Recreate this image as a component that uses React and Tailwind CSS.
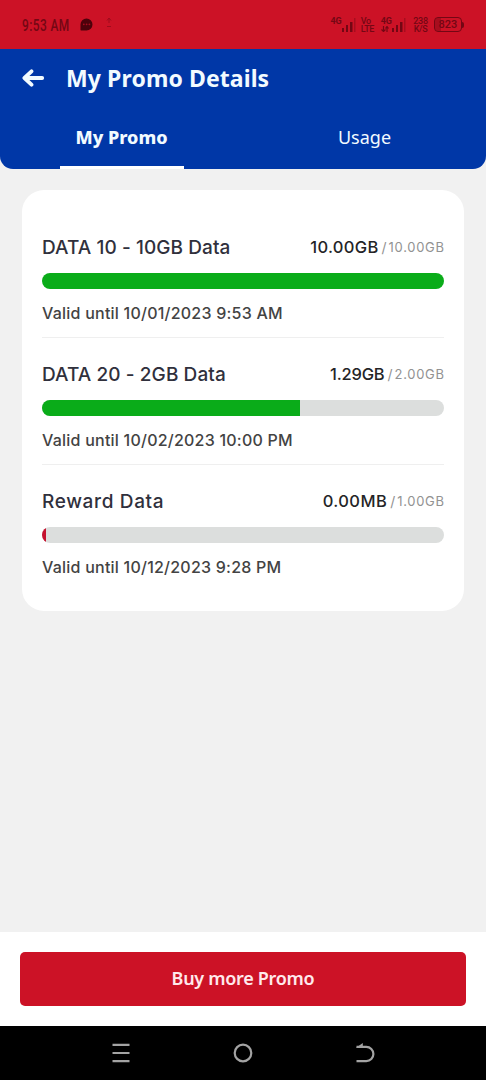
import React, { useState } from 'react';

const promos = [
  {
    name: 'DATA 10 - 10GB Data',
    nameClass: 'tracking-[0.08px]',
    left: '10.00GB',
    leftClass: 'tracking-[0.3px]',
    total: '10.00GB',
    until: '10/01/2023 9:53 AM',
    percent: 100,
    color: 'bg-[#0aac19]',
  },
  {
    name: 'DATA 20 - 2GB Data',
    nameClass: 'tracking-[0.08px]',
    left: '1.29GB',
    leftClass: 'tracking-[-0.2px]',
    total: '2.00GB',
    until: '10/02/2023 10:00 PM',
    percent: 64.2,
    color: 'bg-[#0aac19]',
  },
  {
    name: 'Reward Data',
    nameClass: 'tracking-[0.65px]',
    left: '0.00MB',
    leftClass: 'tracking-[0.4px]',
    total: '1.00GB',
    until: '10/12/2023 9:28 PM',
    percent: 1,
    color: 'bg-[#c5122f]',
  },
];

const Signal = () => (
  <svg width="14" height="14" viewBox="0 0 14 14" fill="currentColor">
    <rect x="0" y="10" width="2" height="4" />
    <rect x="4" y="7" width="2" height="7" />
    <rect x="8" y="4" width="2.5" height="10" />
    <rect x="12" y="0" width="1.5" height="14" opacity="0.4" />
  </svg>
);

const StatusBar = () => (
  <div className="h-[49px] shrink-0 bg-[#cc1226] text-[#740714] flex items-center justify-between pl-[22px] pr-[22px] font-['Roboto',sans-serif]">
    <div className="flex items-center">
      <span className="w-[47px] text-[17px] leading-4 font-medium tracking-[0.6px] whitespace-nowrap">
        <span className="inline-block origin-left scale-x-[0.7]">9:53 AM</span>
      </span>
      <svg className="ml-[11px]" width="13" height="13" viewBox="0 0 13 13">
        <path d="M6.5 0.5a6 6 0 1 1 0 12H1a.7.7 0 0 1-.5-.7V6.5a6 6 0 0 1 6-6z" fill="#4d020b" />
        <circle cx="3.8" cy="6.3" r="0.9" fill="#a80d1e" />
        <circle cx="6.6" cy="6.3" r="0.9" fill="#a80d1e" />
        <circle cx="9.4" cy="6.3" r="0.9" fill="#a80d1e" />
      </svg>
      <svg className="ml-[13px] mb-1" width="6" height="12" viewBox="0 0 6 12" fill="none" stroke="#9e0b1c" strokeWidth="1">
        <path d="M1 3.5L3 1l2 2.5M3 1v5M1 9.5h4" />
      </svg>
    </div>

    <div className="flex items-center h-4">
      <div className="flex items-end h-[15px]">
        <span className="text-[9px] leading-[9px] font-bold self-start">4G</span>
        <Signal />
      </div>
      <div className="ml-[5px] w-[15px] text-[9px] leading-[8px] font-medium tracking-[-0.3px] flex flex-col">
        <span>Vo</span>
        <span>LTE</span>
      </div>
      <div className="ml-[5px] flex items-end h-[15px]">
        <div className="self-start flex flex-col">
          <span className="text-[9px] leading-[9px] font-bold">4G</span>
          <svg width="8" height="6" viewBox="0 0 8 6" fill="none" stroke="currentColor" strokeWidth="1.2">
            <path d="M2.5 0v5.5M.5 3.5l2 2 2-2M6 6V.5M4.5 2.5l1.5-2 1.5 2" />
          </svg>
        </div>
        <Signal />
      </div>
      <div className="ml-[7px] w-[15px] text-[9px] leading-[8px] font-medium tracking-[-0.3px] flex flex-col items-center">
        <span>238</span>
        <span>K/S</span>
      </div>
      <div className="ml-[6px] flex items-center">
        <div className="relative w-[28px] h-[15px] border-[1.5px] border-current rounded-[4px] flex items-center justify-center text-[11px] leading-none font-medium overflow-hidden">
          <div className="absolute left-0 top-0 h-full w-[6px] bg-[#740714]/40" />
          <span className="relative">823</span>
        </div>
        <div className="w-[2px] h-[6px] bg-current rounded-r" />
      </div>
    </div>
  </div>
);

const Header = ({ tab, setTab }) => (
  <div className="h-[120px] shrink-0 bg-[#0037a7] text-[#f2fbff] rounded-b-[13px] flex flex-col font-['Noto_Sans',sans-serif]">
    <div className="h-[58px] pl-[22px] flex items-center">
      <button aria-label="Back">
        <svg width="23" height="18" viewBox="0 0 23 18" fill="none" stroke="currentColor" strokeWidth="3.8" strokeLinecap="round" strokeLinejoin="round">
          <path d="M20.2 9H3M9.5 2.3L2.4 9l7.1 6.7" />
        </svg>
      </button>
      <h1 className="ml-[21px] text-[23px] leading-[30px] font-bold tracking-[0.1px] whitespace-nowrap">My Promo Details</h1>
    </div>
    <div className="flex-1 flex">
      <button onClick={() => setTab('promo')} className="w-1/2 flex flex-col items-center">
        <span className="h-[59px] pt-[2px] flex items-center text-[18px] font-extrabold">My Promo</span>
        {tab === 'promo' && <span className="w-[124px] h-[3px] bg-white" />}
      </button>
      <button onClick={() => setTab('usage')} className="w-1/2 flex flex-col items-center">
        <span className="h-[59px] pt-[2px] flex items-center text-[18px]">Usage</span>
        {tab === 'usage' && <span className="w-[124px] h-[3px] bg-white" />}
      </button>
    </div>
  </div>
);

const PromoItem = ({ promo, last }) => (
  <div className={`h-[127px] pt-[25px] border-b ${last ? 'border-transparent' : 'border-[#efefef]'}`}>
    <div className="h-6 flex items-center justify-between whitespace-nowrap">
      <h2 className={`text-[19px] font-medium text-[#30303c] ${promo.nameClass}`}>{promo.name}</h2>
      <div className="-mt-[2px] flex items-center text-[#929292]">
        <span className={`text-[16.5px] font-medium text-[#242426] ${promo.leftClass}`}>{promo.left}</span>
        <span className="ml-[3px] text-[14px]">/</span>
        <span className="ml-[2px] -mr-[0.7px] mt-px text-[13px] tracking-[0.7px]">{promo.total}</span>
      </div>
    </div>
    <div className="mt-[13px] h-4 rounded-full bg-[#dcdedd] overflow-hidden">
      <div className={`h-full ${promo.color}`} style={{ width: `${promo.percent}%` }} />
    </div>
    <p className="mt-3 h-6 flex items-center text-[16px] font-medium tracking-[0.23px] text-[#434343] whitespace-nowrap">
      Valid until {promo.until}
    </p>
  </div>
);

const NavBar = () => (
  <div className="h-[54px] shrink-0 bg-black text-[#a3a3a3] flex items-center justify-center gap-[102px]">
    <svg width="20" height="22" viewBox="0 0 20 22" stroke="currentColor" strokeWidth="2.2">
      <path d="M1.5 2.9h17M1.5 11h17M1.5 19.100h17" />
    </svg>
    <svg width="20" height="20" viewBox="0 0 20 20" fill="none" stroke="currentColor" strokeWidth="2.2">
      <circle cx="10" cy="10" r="8.3" />
    </svg>
    <svg width="20" height="22" viewBox="0 0 20 22" fill="none" stroke="currentColor" strokeWidth="2.2">
      <path d="M1.500 4.900H11.300a7 7 0 0 1 0 14.200H1.500" />
      <path d="M1 5.800L7.800 1v4.800z" fill="currentColor" stroke="none" />
    </svg>
  </div>
);

const App = () => {
  const [tab, setTab] = useState('promo');

  return (
    <div className="w-full h-[1080px] flex flex-col bg-[#f1f1f1] overflow-hidden font-['Inter',sans-serif]">
      <StatusBar />
      <Header tab={tab} setTab={setTab} />

      <main className="flex-1 pt-[21px] px-[22px]">
        <div className="h-[421px] bg-white rounded-[22px] pt-[21px] px-5">
          {promos.map((promo, i) => (
            <PromoItem key={promo.name} promo={promo} last={i === promos.length - 1} />
          ))}
        </div>
      </main>

      <div className="h-[94px] shrink-0 bg-white px-5 pt-5">
        <button className="w-full h-[54px] pb-[2px] rounded-[5px] bg-[#cc1226] text-[#ffe9ec] text-[18px] font-semibold tracking-[-0.3px] font-['Noto_Sans',sans-serif]">
          Buy more Promo
        </button>
      </div>
      <NavBar />
    </div>
  );
};

export default App;
